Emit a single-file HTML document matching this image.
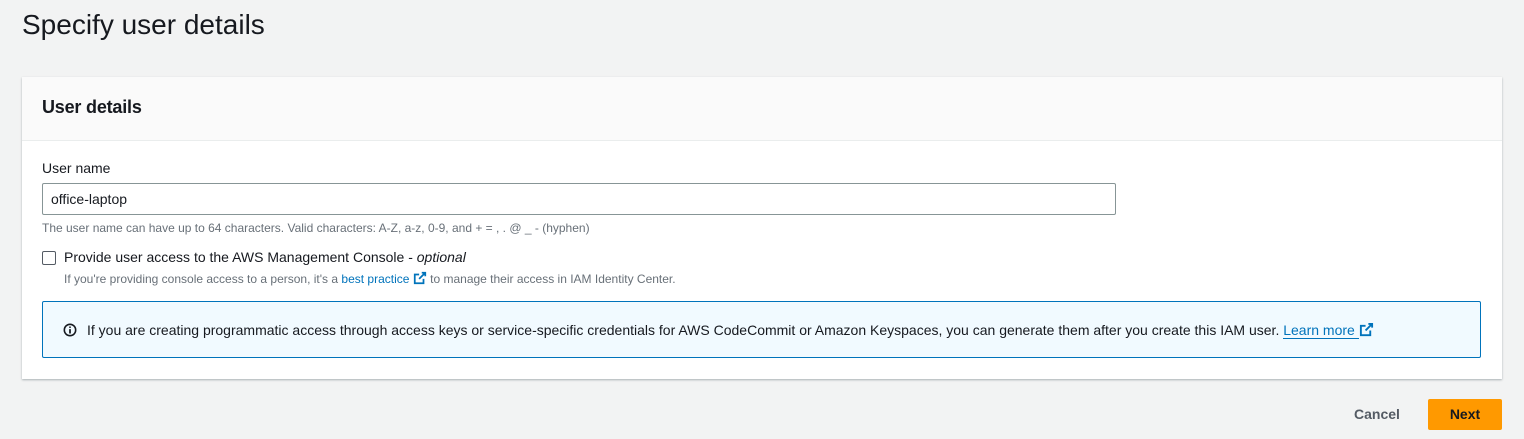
<!DOCTYPE html>
<html><head><style>
body{margin:0;background:#f2f3f3;font-family:"Liberation Sans",sans-serif;color:#16191f;width:1524px;height:439px;overflow:hidden;position:relative}
.a{position:absolute;white-space:nowrap}
h1{position:absolute;left:22px;top:9px;margin:0;font-weight:400;font-size:28px}
.card{position:absolute;left:22px;top:77px;width:1480px;height:302px;background:#fff;box-shadow:0 1px 2px rgba(0,28,36,.3);border-radius:0}
.hdr{position:absolute;left:0;top:0;width:1480px;height:63px;background:#fafafa;border-bottom:1px solid #eaeded}
.hdr b{position:absolute;left:20px;top:20px;font-size:18px;letter-spacing:-0.2px}
.lbl{font-size:14px}
.input{position:absolute;left:42px;top:183px;width:1072px;height:30px;border:1px solid #879596;border-radius:2px;background:#fff}
.small{font-size:12px;color:#687078}
.cb{position:absolute;left:42px;top:251px;width:12px;height:12px;border:1px solid #545b64;border-radius:2px;background:#fff}
.info{position:absolute;left:42px;top:301px;width:1437px;height:55px;background:#f1faff;border:1px solid #0073bb;border-radius:2px}
a{color:#0073bb;text-decoration:none}
.next{position:absolute;left:1428px;top:399px;width:74px;height:31px;background:#ff9900;border-radius:2px;font-weight:bold;font-size:14px;text-align:center;line-height:31px}
</style></head><body>
<h1>Specify user details</h1>
<div class="card"><div class="hdr"><b>User details</b></div></div>
<div class="a lbl" style="left:42px;top:160px">User name</div>
<div class="input"></div>
<div class="a lbl" style="left:51px;top:191px">office-laptop</div>
<div class="a small" style="left:42px;top:221px">The user name can have up to 64 characters. Valid characters: A-Z, a-z, 0-9, and + = , . @ _ - (hyphen)</div>
<div class="cb"></div>
<div class="a lbl" style="left:64px;top:249px">Provide user access to the AWS Management Console - <i>optional</i></div>
<div class="a small" style="left:64px;top:271px">If you're providing console access to a person, it's a <a>best practice</a> <svg width="14" height="14" viewBox="0 0 16 16" style="vertical-align:-2px"><path d="M10 2h4v4M14 2L7 9M12 9v5H2V4h5" fill="none" stroke="#0073bb" stroke-width="2"/></svg> to manage their access in IAM Identity Center.</div>
<div class="info"></div>
<svg class="a" style="left:63px;top:323px" width="14" height="14" viewBox="0 0 16 16"><circle cx="8" cy="8" r="6.5" fill="none" stroke="#16191f" stroke-width="1.8"/><path d="M8 7v5M8 4v1.6" stroke="#16191f" stroke-width="2"/></svg>
<div class="a lbl" style="left:87px;top:322px">If you are creating programmatic access through access keys or service-specific credentials for AWS CodeCommit or Amazon Keyspaces, you can generate them after you create this IAM user. <a style="border-bottom:1px solid #0073bb">Learn more </a><svg width="15" height="15" viewBox="0 0 16 16" style="vertical-align:-2px"><path d="M10 2h4v4M14 2L7 9M12 9v5H2V4h5" fill="none" stroke="#0073bb" stroke-width="2"/></svg></div>
<div class="a" style="left:1354px;top:406px;font-size:14px;font-weight:bold;color:#545b64">Cancel</div>
<div class="next">Next</div>
</body></html>
